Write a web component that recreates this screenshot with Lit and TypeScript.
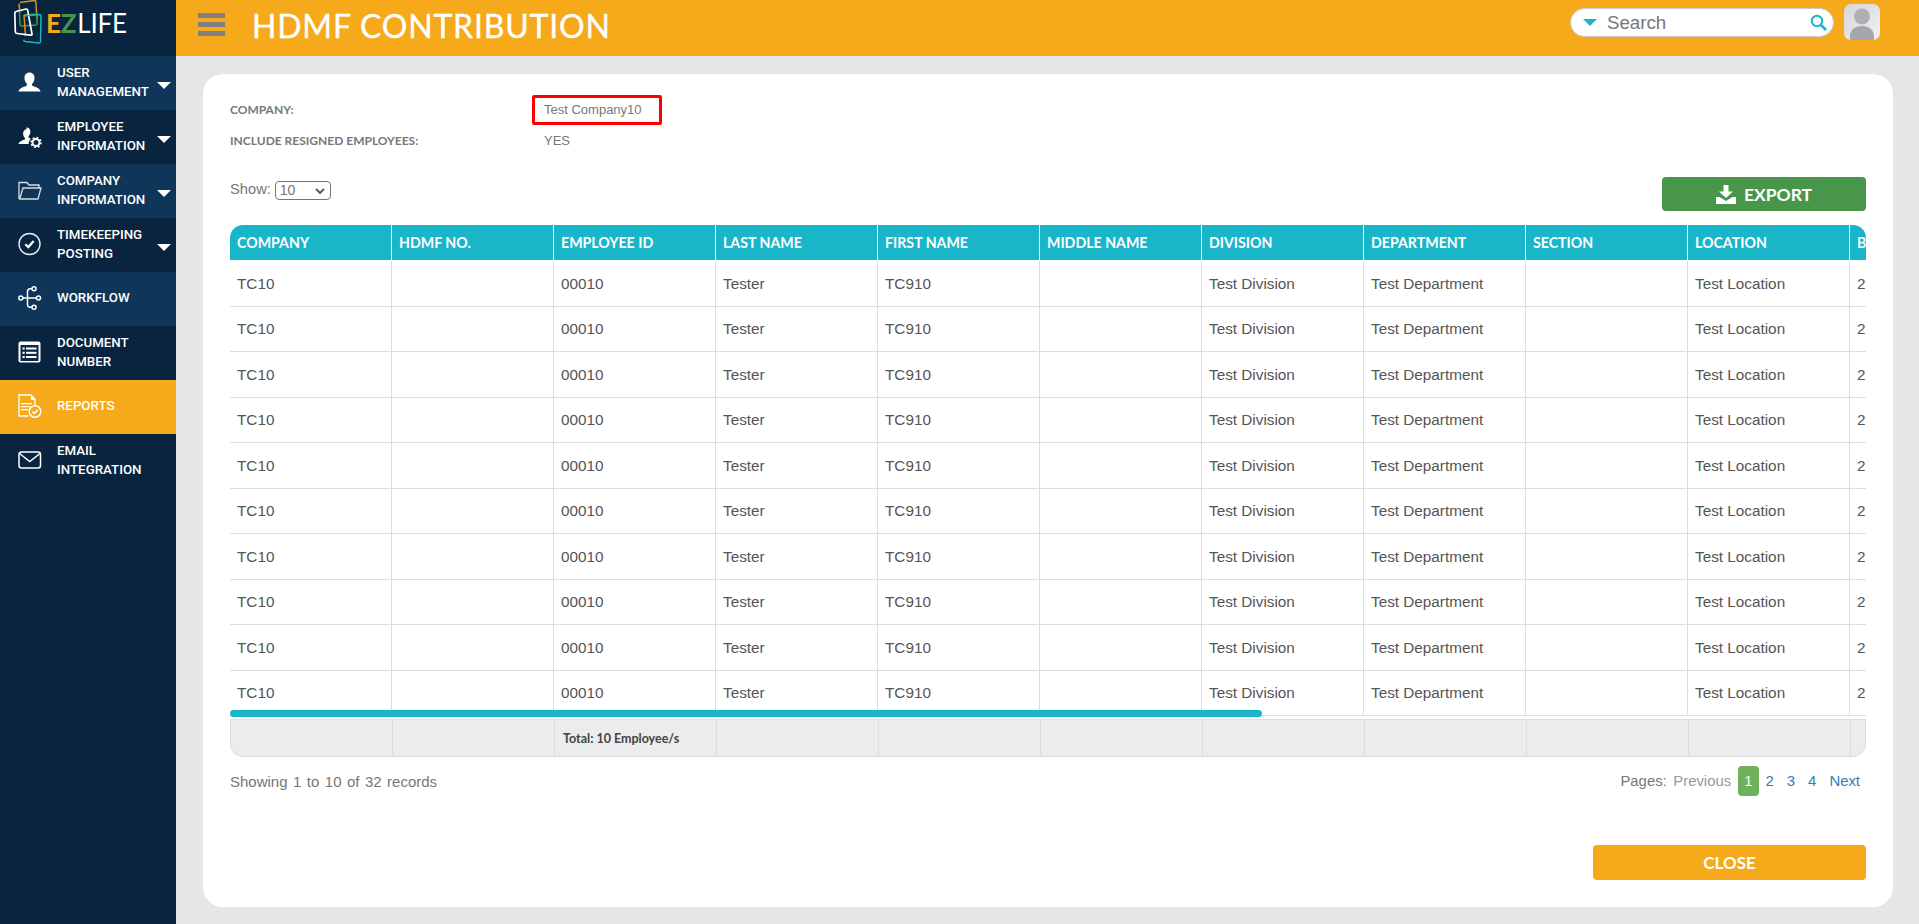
import { LitElement, html, css, svg } from "lit";
import { customElement } from "lit/decorators.js";

const ICONS: Record<string, unknown> = {
  user: svg`<path fill="#fff" d="M11.500 2.500c3.200 0 5 2.300 5 5.400 0 2.400-1 4.500-2.200 5.700-.5.5-.4 1.700.2 2.200 1.500 1 7.500 2 8 5.700H.5c.5-3.700 6.500-4.700 8-5.700.6-.5.7-1.700.2-2.200C7.500 12.400 6.500 10.300 6.500 7.900c0-3.100 1.800-5.400 5-5.400z"/>`,
  emp: svg`<path fill="#fff" d="M8.500 3.500c2.500 0 3.900 1.800 3.900 4.200 0 1.900-.8 3.500-1.700 4.400-.4.400-.3 1.300.2 1.700.5.300 1.400.7 2.100 1-1.400 1-2.300 2.600-2.300 4.400 0 .3 0 .5.100.8H.5c.4-3 5-3.800 6.200-4.500.5-.4.500-1.300.1-1.700-.9-.9-1.700-2.500-1.700-4.400 0-2.400 1.500-4.200 3.400-3.900z"/>
    <circle cx="18" cy="18.500" r="3.500" fill="none" stroke="#fff" stroke-width="2"/>
    <circle cx="18" cy="18.500" r="5" fill="none" stroke="#fff" stroke-width="1.500" stroke-dasharray="1.800 2.100"/>`,
  folder: svg`<path fill="none" stroke="#d8dde3" stroke-width="1.300" d="M1 21V4.500h8l2 2.500h10v3M1 21h19l3-11H5L2 20"/>`,
  check: svg`<circle cx="11.500" cy="12" r="10.500" fill="none" stroke="#e8ebef" stroke-width="1.400"/><path fill="none" stroke="#fff" stroke-width="2.200" d="M7.300 12.300l3 2.800 5.400-6"/>`,
  flow: svg`<g fill="none" stroke="#fff" stroke-width="1.500"><circle cx="2.800" cy="12" r="2"/><circle cx="16" cy="2.800" r="2"/><circle cx="20.500" cy="12" r="2"/><circle cx="16" cy="21.200" r="2"/><path d="M4.800 12h13.700M9.500 12V5.500q0-2.700 2.700-2.700H14M9.500 12v6.500q0 2.700 2.700 2.700H14"/></g>`,
  doc: svg`<rect x=".5" y="1.500" width="22" height="21" rx="2" fill="#fff"/><rect x="2.500" y="5" width="18" height="16" fill="#0b2a48"/><g fill="#fff"><rect x="4.500" y="7.500" width="2.200" height="2"/><rect x="8" y="7.500" width="10.500" height="2"/><rect x="4.500" y="11.800" width="2.200" height="2"/><rect x="8" y="11.800" width="10.500" height="2"/><rect x="4.500" y="16" width="2.200" height="2"/><rect x="8" y="16" width="10.500" height="2"/></g>`,
  report: svg`<path fill="none" stroke="#fff" stroke-width="1.400" d="M10.500 22H1V1h12l4 4.500V11"/><path fill="#fff" d="M13 1v5h4.500zM3 9h11v1.300H3zM3 12h9v1.300H3zM3 15h7v1.300H3z"/><circle cx="17" cy="17.500" r="5.800" fill="#f6a91b" stroke="#fff" stroke-width="1.500"/><path fill="none" stroke="#fff" stroke-width="1.600" d="M14.300 17.500l2 2 3.300-3.600"/>`,
  mail: svg`<rect x="1" y="4" width="21.500" height="16" rx="2.500" fill="none" stroke="#fff" stroke-width="1.500"/><path fill="none" stroke="#fff" stroke-width="1.500" d="M1.500 5.500l10.250 8 10.250-8"/>`,
};

const NAV = [
  { lines: ["USER", "MANAGEMENT"], icon: "user", caret: true, tone: "light" },
  { lines: ["EMPLOYEE", "INFORMATION"], icon: "emp", caret: true, tone: "dark" },
  { lines: ["COMPANY", "INFORMATION"], icon: "folder", caret: true, tone: "light" },
  { lines: ["TIMEKEEPING", "POSTING"], icon: "check", caret: true, tone: "dark" },
  { lines: ["WORKFLOW"], icon: "flow", caret: false, tone: "light" },
  { lines: ["DOCUMENT", "NUMBER"], icon: "doc", caret: false, tone: "dark" },
  { lines: ["REPORTS"], icon: "report", caret: false, tone: "active" },
  { lines: ["EMAIL", "INTEGRATION"], icon: "mail", caret: false, tone: "dark" },
];

const HEADS = ["COMPANY", "HDMF NO.", "EMPLOYEE ID", "LAST NAME", "FIRST NAME", "MIDDLE NAME", "DIVISION", "DEPARTMENT", "SECTION", "LOCATION", "B"];
const ROW = ["TC10", "", "00010", "Tester", "TC910", "", "Test Division", "Test Department", "", "Test Location", "2"];
const FOOT = ["", "", "Total: 10 Employee/s", "", "", "", "", "", "", "", ""];
const ROWS = Array.from({ length: 10 }, () => ROW);

@customElement("app-root")
export class AppRoot extends LitElement {
  static styles = css`
    :host { display: block; height: 100vh; overflow: hidden; font-family: "Liberation Sans", Arial, sans-serif; color: #555; }
    * { box-sizing: border-box; }
    .page { display: flex; height: 100%; }
    .side { width: 176px; flex: none; background: #08243f; display: flex; flex-direction: column; }
    .logo { height: 56px; display: flex; align-items: flex-start; }
    .logo svg { flex: none; width: 46px; height: 46px; }
    .logo-text { font-family: Lato, sans-serif; font-size: 26px; line-height: 26px; margin-top: 10px; color: #fff; letter-spacing: -.2px; }
    .logo-e { color: #f6a91b; font-weight: 700; }
    .logo-z { color: #48964a; font-weight: 700; margin-right: 1px; }
    .nav { height: 54px; display: flex; align-items: center; padding: 0 5px 3px 18px; color: #fff; font-family: Roboto, sans-serif; font-weight: 500; font-size: 13.300px; line-height: 19px; }
    .light { background: #0f3558; }
    .dark { background: #08243f; }
    .active { background: #f6a91b; }
    .nav svg.ico { width: 24px; height: 24px; flex: none; margin-right: 15px; }
    .caret { margin-left: auto; align-self: flex-start; margin-top: 26px; width: 0; height: 0; border-left: 7.500px solid transparent; border-right: 7.500px solid transparent; border-top: 7px solid #fff; }
    .main { flex: 1; min-width: 0; display: flex; flex-direction: column; background: #e6e6e6; }
    .top { height: 56px; flex: none; background: #f6a91b; display: flex; align-items: flex-start; padding: 0 39px 0 22px; }
    .burger { width: 27px; display: flex; flex-direction: column; gap: 4.500px; margin-top: 13px; }
    .burger i { display: block; height: 4.700px; background: #808080; }
    .title { font-family: Lato, sans-serif; font-size: 32px; font-weight: 400; -webkit-text-stroke: .35px #fff; letter-spacing: .8px; color: #fff; margin-left: 27px; flex: 1; line-height: 51px; }
    .search { width: 264px; height: 29px; border-radius: 15px; background: #fff; border: 1px solid #ccc; display: flex; align-items: center; padding: 0 6px 0 12px; margin-top: 8px; }
    .search-caret { width: 0; height: 0; border-left: 7.500px solid transparent; border-right: 7.500px solid transparent; border-top: 7px solid #19b5c9; margin-right: 10px; }
    .search-text { flex: 1; font-size: 18.700px; color: #777; }
    .search svg { width: 17px; height: 17px; }
    .avatar { width: 36px; height: 36px; margin: 4px 0 0 10px; border-radius: 7px; overflow: hidden; }
    .avatar svg { display: block; width: 36px; height: 36px; }
    .card { flex: 1; margin: 18px 26px 17px 27px; background: #fff; border-radius: 20px; padding: 21px 27px 27px; display: flex; flex-direction: column; min-height: 0; }
    .meta { display: grid; grid-template-columns: 302px 130px; grid-auto-rows: 30px; row-gap: 1px; align-items: center; }
    .label { font-family: Lato, sans-serif; font-weight: 700; font-size: 12px; line-height: 14px; padding-bottom: 1px; color: #777; }
    .value { font-size: 13px; color: #777; padding-left: 12px; line-height: 26px; }
    .boxed { border: 3px solid #f00; border-radius: 2px; height: 30px; padding-left: 9px; line-height: 24px; }
    .tools { display: flex; justify-content: space-between; margin-top: 21px; height: 34px; }
    .show { display: flex; align-items: flex-start; font-size: 14.700px; color: #777; gap: 4px; line-height: 17px; margin-top: 4px; }
    .select { width: 56px; height: 19px; border: 1px solid #767676; border-radius: 4px; font-size: 14px; color: #777; display: flex; align-items: center; padding-left: 4px; justify-content: space-between; padding-right: 5px; line-height: 17px; }
    .select svg { width: 10px; height: 6px; }
    .btn { font-family: Lato, sans-serif; font-weight: 700; color: #fff; border-radius: 4px; display: flex; align-items: center; justify-content: center; }
    .export { width: 204px; background: #48964a; font-size: 17.500px; gap: 8px; }
    .export svg { width: 20px; height: 19px; }
    .wrap { position: relative; margin-top: 14px; overflow: hidden; border-radius: 13px 13px 0 0; flex: none; }
    .grid { display: grid; grid-template-columns: repeat(11, 162px); grid-auto-rows: 45.500px; }
    .head { height: 35px; background: #19b5c9; color: #fff; font-family: Lato, sans-serif; font-weight: 700; font-size: 14.200px; display: flex; align-items: center; padding-left: 7px; border-right: 1px solid #fff; white-space: nowrap; }
    .heads { grid-auto-rows: 35px; }
    .rows { padding-top: 1px; }
    .cell { font-size: 15.300px; color: #555; display: flex; align-items: center; padding: 1px 0 0 7px; border-right: 1px solid #ddd; border-bottom: 1.500px solid #ddd; white-space: nowrap; }
    .bar { position: absolute; left: 0; bottom: 0; width: 1032px; height: 7px; border-radius: 4px; background: #19b5c9; }
    .spacer { height: 1px; flex: none; }
    .gap { height: 2px; flex: none; }
    .foot { height: 38px; flex: none; overflow: hidden; background: #ececec; border: 1px solid #ddd; border-radius: 0 0 13px 13px; display: grid; grid-template-columns: repeat(11, 162px); }
    .fcell { border-right: 1px solid #ddd; font-family: Lato, sans-serif; font-weight: 700; font-size: 12.500px; color: #444; display: flex; align-items: center; padding-left: 8px; white-space: nowrap; }
    .info { display: flex; justify-content: space-between; align-items: center; margin-top: 9px; height: 30px; font-size: 15px; color: #777; }
    .count { word-spacing: 1.300px; }
    .pages { display: flex; align-items: center; font-size: 14.900px; }
    .pg { padding: 0 6.500px; color: #337ab7; height: 30px; line-height: 30px; }
    .pg.off { color: #999; }
    .pg.on { background: #6fb05c; color: #fff; border-radius: 4px; }
    .pg.last { padding-right: 6px; }
    .actions { margin-top: auto; display: flex; justify-content: flex-end; }
    .close { width: 273px; height: 35px; background: #f6a91b; font-size: 17px; }
  `;

  private navItem(n: (typeof NAV)[number]) {
    return html`<div class="nav ${n.tone}">
      <svg class="ico" viewBox="0 0 24 24">${ICONS[n.icon]}</svg>
      <div>${n.lines.map((l) => html`<div>${l}</div>`)}</div>
      ${n.caret ? html`<span class="caret"></span>` : ""}
    </div>`;
  }

  render() {
    return html`<div class="page">
      <aside class="side">
        <div class="logo">
          <svg viewBox="0 0 46 46" fill="none" stroke-width="1.500">
            <path stroke="#f6a91b" stroke-opacity=".85" d="M20 2.500L34.500 0.500q1.200 0 1.300 1.200L37 18.500M19.500 10L19 3.500"/>
            <path stroke="#48964a" d="M19.500 10l.5 14q0 2 2 2l14.500-1M24 15l13-1v11"/>
            <path stroke="#f6a91b" stroke-opacity=".85" d="M24 15l1.500 21"/>
            <path stroke="#fff" stroke-width="1.700" d="M16 11.500L26 9q1.500-.2 1.700 1.500L32 34q.3 1.500-1.500 1.200L17 33.500q-1.700-.2-1.700-2L14.800 13q0-1.300 1.200-1.500z"/>
            <path stroke="#19b5c9" d="M25 16l14.500-1.500q1.500 0 1.500 1.500l-.5 25.500q0 1.700-1.700 1.400L25 41.500q-1.500-.4-1.200-1.900"/>
          </svg>
          <div class="logo-text"><span class="logo-e">E</span><span class="logo-z">Z</span>LIFE</div>
        </div>
        ${NAV.map((n) => this.navItem(n))}
      </aside>
      <div class="main">
        <header class="top">
          <div class="burger"><i></i><i></i><i></i></div>
          <div class="title">HDMF CONTRIBUTION</div>
          <div class="search">
            <span class="search-caret"></span>
            <span class="search-text">Search</span>
            <svg viewBox="0 0 17 17" fill="none" stroke="#19b5c9"><circle cx="7" cy="7" r="5.200" stroke-width="2"/><path stroke-width="2.600" d="M11 11l5 5"/></svg>
          </div>
          <div class="avatar">
            <svg viewBox="0 0 36 36">
              <defs><linearGradient id="av" x1="0" y1="0" x2="1" y2="1"><stop offset="0" stop-color="#d5d6da"/><stop offset="1" stop-color="#f1f1f2"/></linearGradient></defs>
              <rect width="36" height="36" fill="url(#av)"/>
              <circle cx="18" cy="12.500" r="8" fill="#aeafb3"/>
              <path fill="#a6a7ab" d="M6 36v-4c0-6 5-10 12-10s12 4 12 10v4z"/>
            </svg>
          </div>
        </header>
        <section class="card">
          <div class="meta">
            <div class="label">COMPANY:</div>
            <div class="value boxed">Test Company10</div>
            <div class="label">INCLUDE RESIGNED EMPLOYEES:</div>
            <div class="value">YES</div>
          </div>
          <div class="tools">
            <div class="show">Show:
              <div class="select">10<svg viewBox="0 0 10 6" fill="none" stroke="#555" stroke-width="1.800"><path d="M1 1l4 4 4-4"/></svg></div>
            </div>
            <div class="btn export">
              <svg viewBox="0 0 20 19" fill="#fff"><path d="M7.500 0h5v6.500H17L10 13 3 6.500h4.500z"/><path d="M0 12h3.500L10 16l6.500-4H20v7H0z"/></svg>
              EXPORT
            </div>
          </div>
          <div class="wrap">
            <div class="grid heads">${HEADS.map((h) => html`<div class="head">${h}</div>`)}</div>
            <div class="grid rows">${ROWS.map((r) => r.map((c) => html`<div class="cell">${c}</div>`))}</div>
            <div class="spacer"></div>
            <div class="bar"></div>
          </div>
          <div class="gap"></div>
          <div class="foot">${FOOT.map((c) => html`<div class="fcell">${c}</div>`)}</div>
          <div class="info">
            <div class="count">Showing 1 to 10 of 32 records</div>
            <div class="pages">
              <span>Pages:</span>
              <span class="pg off">Previous</span>
              <span class="pg on">1</span>
              <span class="pg">2</span>
              <span class="pg">3</span>
              <span class="pg">4</span>
              <span class="pg last">Next</span>
            </div>
          </div>
          <div class="actions"><div class="btn close">CLOSE</div></div>
        </section>
      </div>
    </div>`;
  }
}
